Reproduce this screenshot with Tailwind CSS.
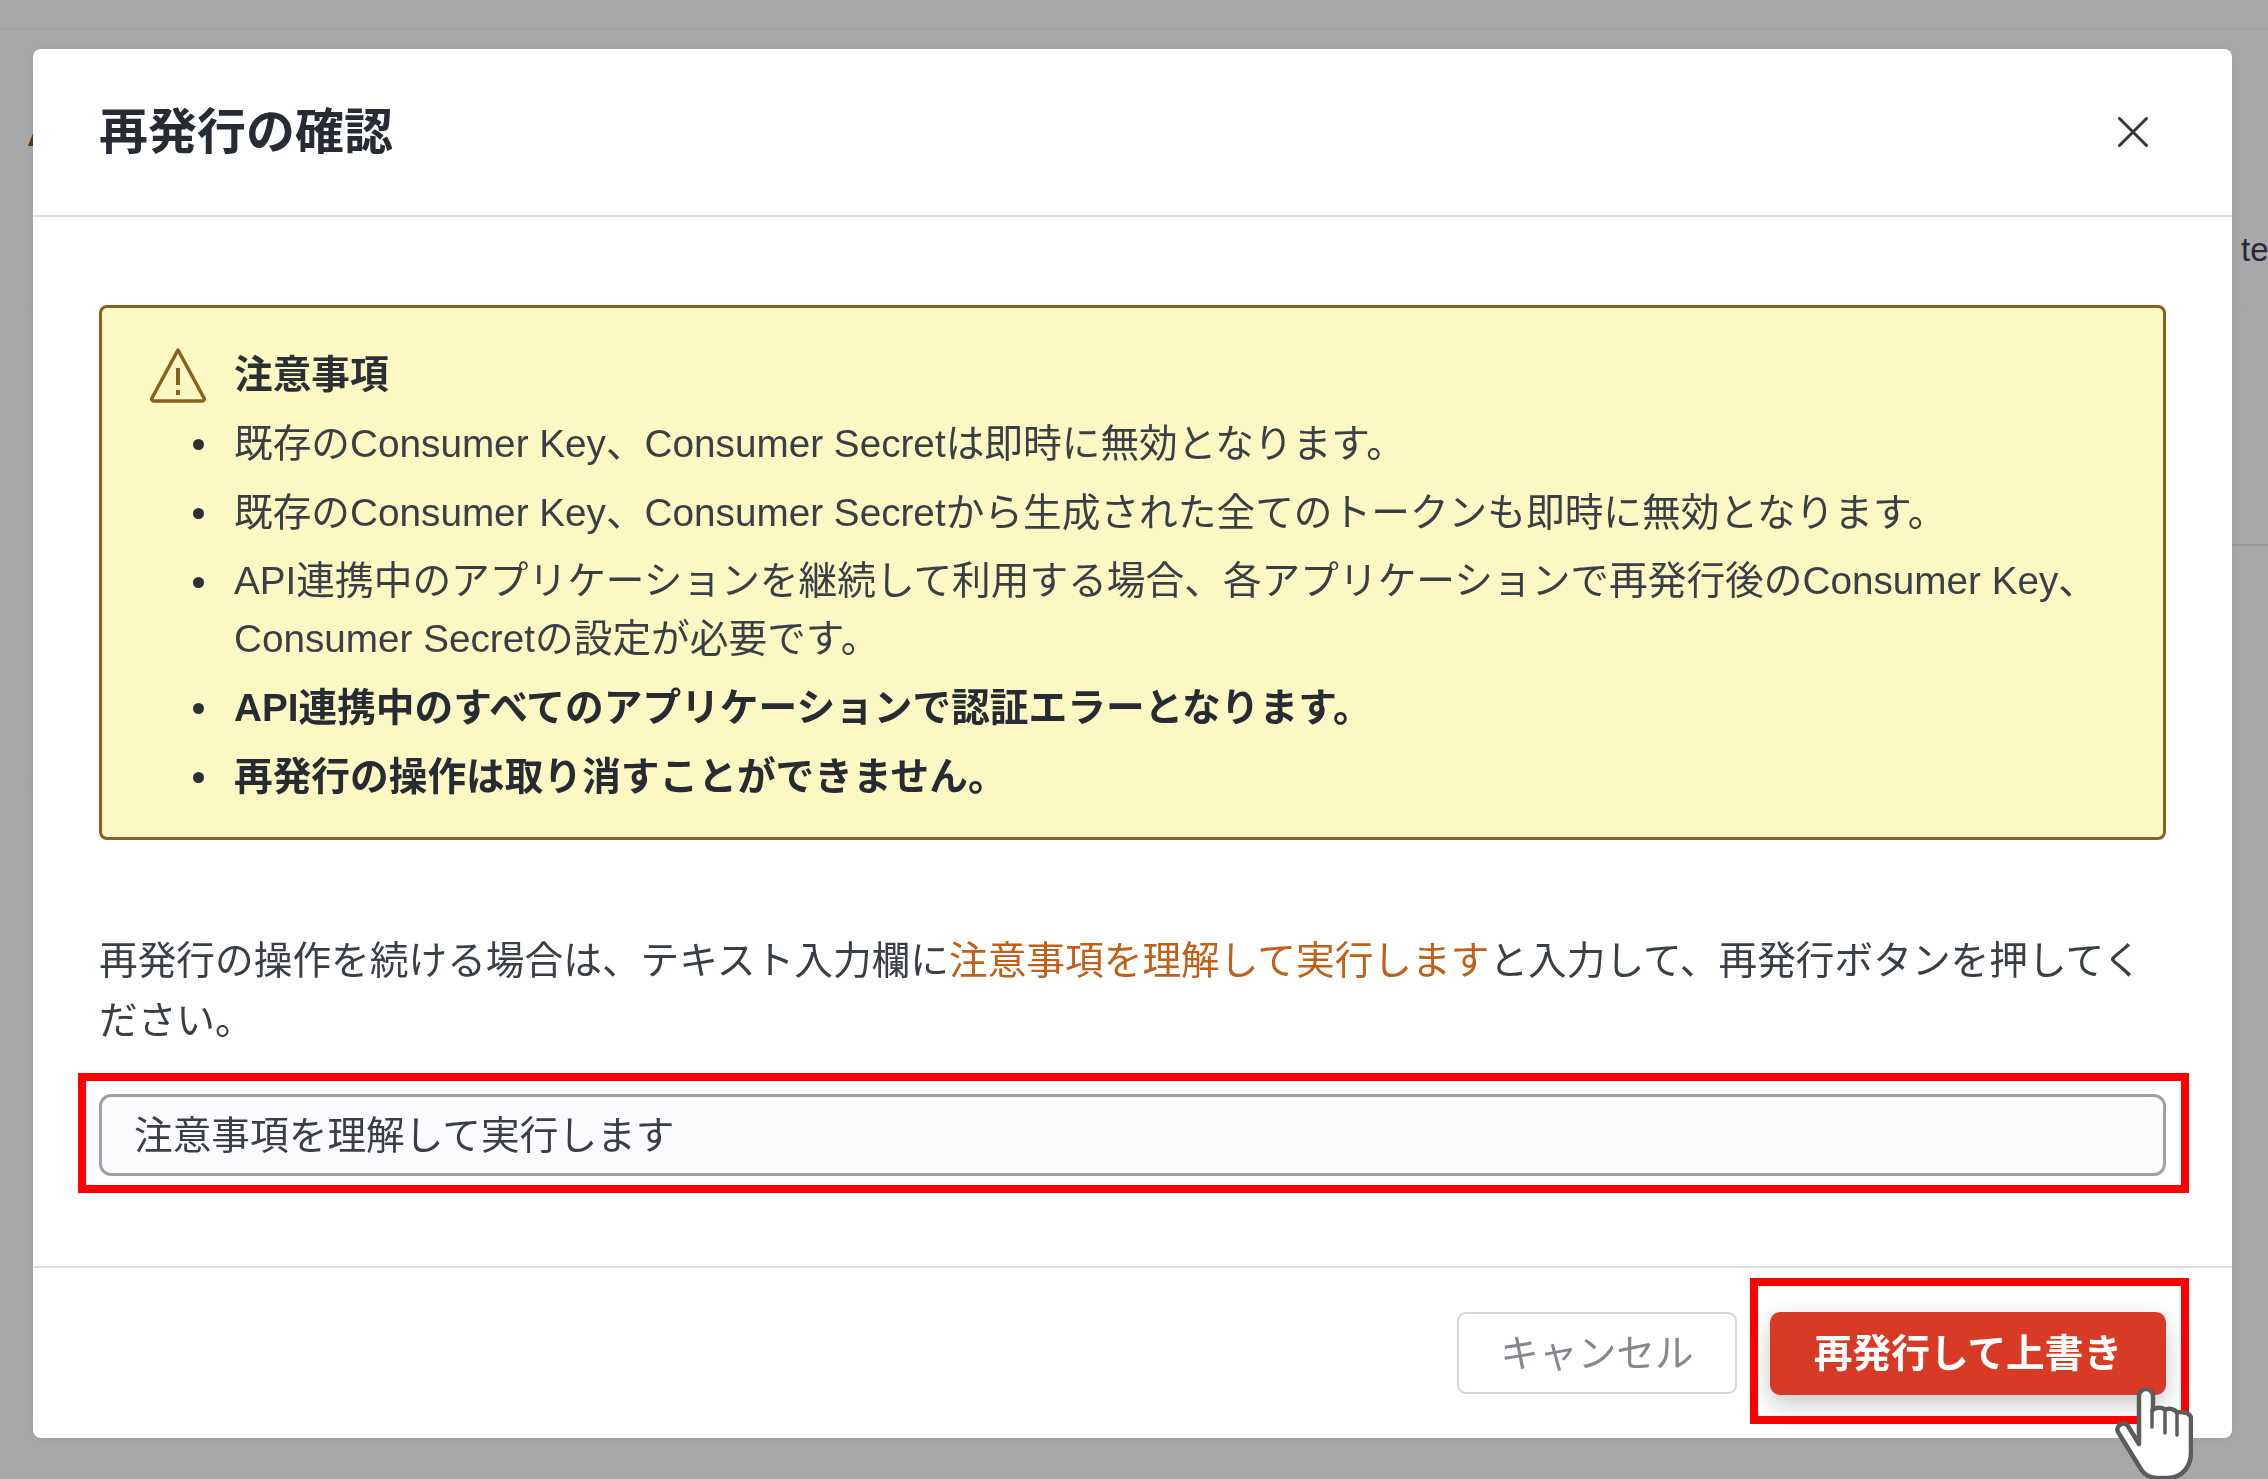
<!DOCTYPE html>
<html lang="ja">
<head>
<meta charset="utf-8">
<script src="https://cdn.jsdelivr.net/npm/@tailwindcss/browser@4"></script>
</head>
<body class="m-0 overflow-hidden bg-[#a7a8aa] font-['Liberation_Sans','Noto_Sans_CJK_JP',sans-serif] text-[#2b2f36]">
<div class="relative h-[1479px] w-[2268px] overflow-hidden pl-[33px] pt-[49px]">
  <div class="absolute left-0 top-[27px] h-[3px] w-full bg-[#a1a2a4]"></div>
  <div class="absolute left-0 top-[305px] h-[2px] w-full bg-[#a4a5a7]"></div>
  <div class="absolute left-[2232px] top-[544px] h-[2px] w-[36px] bg-[#9a9b9d]"></div>
  <div class="absolute left-0 top-[783px] h-[2px] w-full bg-[#a3a4a6]"></div>
  <div class="absolute left-[2241px] top-[228px] text-[33px] leading-[44px] text-[#2c2535]">te</div>
  <svg class="absolute left-[27px] top-[132px]" width="7" height="15" viewBox="0 0 7 15"><path d="M1 14L6 1v13z" fill="#5a3a10"/></svg>

  <div class="relative flex h-[1389px] w-[2199px] flex-col rounded-[8px] bg-white shadow-[0_0_14px_rgba(0,0,0,0.06)] blur-[0.5px]">
    <header class="flex h-[168px] shrink-0 items-center justify-between border-b-2 border-[#dcdde1] pl-[66px] pr-[84px]">
      <h1 class="m-0 text-[49px] font-bold leading-[60px] text-[#272b33]">再発行の確認</h1>
      <svg class="size-[30px]" viewBox="0 0 30 30" fill="none" stroke="#33373d" stroke-width="3" stroke-linecap="round"><path d="M1.5 1.5l27 27M28.5 1.5l-27 27"/></svg>
    </header>
    <main class="flex-1 px-[66px] pt-[88px] text-[38.7px]">
      <section class="h-[535px] rounded-[8px] border-[3px] border-[#8a6020] bg-[#fbf8c4] pl-[47px] pr-[40px] pt-[32px]">
        <div class="flex items-center gap-[27px] font-bold leading-[69px]">
          <svg class="h-[56px] w-[58px]" viewBox="0 0 58 56" fill="none" stroke="#8a6020" stroke-width="3.5" stroke-linejoin="round"><path d="M29 3L3 51a2 2 0 0 0 2 3h48a2 2 0 0 0 2-3z"/><path d="M29 21v17M29 43v5" stroke-width="4"/></svg>
          <span>注意事項</span>
        </div>
        <ul class="m-0 list-none p-0 pl-[44px] text-[#3a3f46]">
          <li class="flex items-start leading-[69px]"><i class="mr-[30px] mt-[30px] size-[11px] shrink-0 rounded-full bg-[#2b2f36]"></i><span>既存のConsumer Key、Consumer Secretは即時に無効となります。</span></li>
          <li class="flex items-start leading-[69px]"><i class="mr-[30px] mt-[30px] size-[11px] shrink-0 rounded-full bg-[#2b2f36]"></i><span>既存のConsumer Key、Consumer Secretから生成された全てのトークンも即時に無効となります。</span></li>
          <li class="mt-[5px] flex items-start leading-[58px]"><i class="mr-[30px] mt-[25px] size-[11px] shrink-0 rounded-full bg-[#2b2f36]"></i><span>API連携中のアプリケーションを継続して利用する場合、各アプリケーションで再発行後のConsumer Key、Consumer Secretの設定が必要です。</span></li>
          <li class="mt-[5px] flex items-start font-bold leading-[69px] text-[#272b33]"><i class="mr-[30px] mt-[30px] size-[11px] shrink-0 rounded-full bg-[#2b2f36]"></i><span>API連携中のすべてのアプリケーションで認証エラーとなります。</span></li>
          <li class="flex items-start font-bold leading-[69px] text-[#272b33]"><i class="mr-[30px] mt-[30px] size-[11px] shrink-0 rounded-full bg-[#2b2f36]"></i><span>再発行の操作は取り消すことができません。</span></li>
        </ul>
      </section>
      <p class="m-0 mt-[91px] leading-[60px] text-[#3a3f46]">再発行の操作を続ける場合は、テキスト入力欄に<span class="text-[#c0601a]">注意事項を理解して実行します</span>と入力して、再発行ボタンを押してください。</p>
      <div class="mt-[43px] flex h-[82px] items-center rounded-[12px] border-[3px] border-[#a0a1a6] bg-[#fcfcfe] pl-[32px] pt-[2px] text-[#3a3f46]">注意事項を理解して実行します</div>
    </main>
    <footer class="flex h-[172px] shrink-0 items-start justify-end gap-[33px] border-t-2 border-[#dcdde1] pr-[66px] pt-[44px]">
      <button class="flex h-[82px] w-[280px] items-center justify-center rounded-[9px] border-2 border-[#d5d6d9] bg-white pt-[2px] text-[38.7px] text-[#85888c]">キャンセル</button>
      <button class="flex h-[83px] w-[396px] items-center justify-center rounded-[10px] bg-[#d83b25] pt-[2px] text-[38.7px] font-bold text-white shadow-[0_10px_24px_rgba(60,70,70,0.28)]">再発行して上書き</button>
    </footer>
  </div>

  <div class="absolute left-[78px] top-[1073px] h-[120px] w-[2111px] border-[8px] border-[#ff0000]"></div>
  <div class="absolute left-[1750px] top-[1278px] h-[146px] w-[439px] border-[8px] border-[#ff0000]"></div>

  <svg class="absolute left-[2115px] top-[1388px]" width="78" height="91" viewBox="0 0 78 91">
    <path d="M24 8a7 7 0 0 1 14 0V22c2-3 10-3 12 0c2-2 10-2 12 3c3-2 13-1 14 5V64c0 14-8 26-24 26H42c-8 0-14-4-18-12L3 44c-3-6 6-12 10-6l11 18z" fill="#fff" stroke="#5c5c5e" stroke-width="4.5" stroke-linejoin="round"/>
    <path d="M37 22v17M50 24v21M62 27v20" fill="none" stroke="#5c5c5e" stroke-width="3.5" stroke-linecap="round"/>
  </svg>
</div>
</body>
</html>
